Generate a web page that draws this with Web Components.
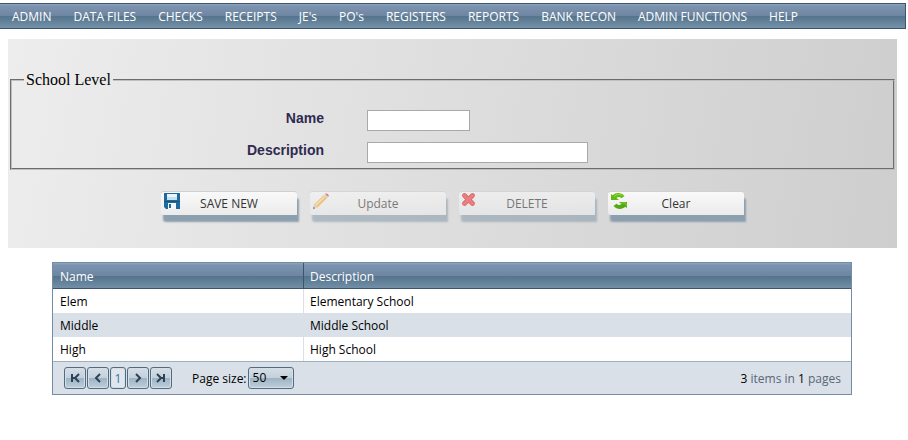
<!DOCTYPE html>
<html lang="en">
<head>
<meta charset="utf-8">
<title>School Level</title>
<style>
    :root {
        --font-ui: "Open Sans", "Noto Sans", sans-serif;
        --color-edge: #3d556c;
        --color-frame: #768ca5;
        --color-alt: #d9e0e7;
        --bar: linear-gradient(#8fa5bb 0, #7c94b0 2px, #6d85a0 50%, #54738c 50%, #7491a8 100%);
    }

    body {
        margin: 3px 0 0;
        background: white;
        font: 12px/16px var(--font-ui);
    }

    main {
        margin: 10px 11px 0 8px;
    }
</style>
</head>
<body>
<menu-bar>
    <menu-item>ADMIN</menu-item>
    <menu-item>DATA FILES</menu-item>
    <menu-item>CHECKS</menu-item>
    <menu-item>RECEIPTS</menu-item>
    <menu-item>JE's</menu-item>
    <menu-item>PO's</menu-item>
    <menu-item>REGISTERS</menu-item>
    <menu-item>REPORTS</menu-item>
    <menu-item>BANK RECON</menu-item>
    <menu-item>ADMIN FUNCTIONS</menu-item>
    <menu-item>HELP</menu-item>
</menu-bar>
<main>
    <form-panel legend="School Level">
        <form-field label="Name" size="short"></form-field>
        <form-field label="Description" size="long"></form-field>
        <tool-button slot="actions" icon="save">SAVE NEW</tool-button>
        <tool-button slot="actions" icon="edit" disabled>Update</tool-button>
        <tool-button slot="actions" icon="remove" disabled>DELETE</tool-button>
        <tool-button slot="actions" icon="refresh">Clear</tool-button>
    </form-panel>
    <data-grid>
        <grid-pager total="3" pages="1"></grid-pager>
    </data-grid>
</main>

<script>
function makeTemplate(html) {
  const template = document.createElement("template");
  template.innerHTML = html;
  return template;
}

class BaseElement extends HTMLElement {
  constructor() {
    super();
    this.attachShadow({ mode: "open" });
    this.shadowRoot.append(this.constructor.template.content.cloneNode(true));
  }

  $(selector) {
    return this.shadowRoot.querySelector(selector);
  }
}

class MenuBar extends BaseElement {
  static template = makeTemplate(`
<style>
    :host {
        display: block;
        margin-right: 2px;
    }

    nav {
        display: flex;
        height: 24px;
        padding-left: 1px;
        border: 1px solid var(--color-edge);
        border-left: none;
        background: var(--bar);
    }
</style>
<nav><slot></slot></nav>
`);
}

class MenuItem extends BaseElement {
  static template = makeTemplate(`
<style>
    :host {
        display: block;
    }

    a {
        display: block;
        padding: 0 11px;
        line-height: 25px;
        color: white;
        text-decoration: none;
        white-space: nowrap;
    }

    a:hover {
        background: var(--color-edge);
    }
</style>
<a href="#"><slot></slot></a>
`);
}

class FormPanel extends BaseElement {
  static template = makeTemplate(`
<style>
    :host {
        display: block;
        padding: 32px 2px 33px;
        background: linear-gradient(100deg, #eeeded, #cecece);
    }

    fieldset {
        margin: 0;
        padding: 21px 12px 5px;
        border: 2px groove #c0c0c0;
    }

    legend {
        padding: 0 2px;
        font: 16px/18px "Liberation Serif", serif;
        color: black;
    }

    .fields {
        display: grid;
        gap: 11px;
    }

    .actions {
        display: flex;
        justify-content: center;
        gap: 13px;
        margin-top: 21px;
    }
</style>
<fieldset>
    <legend></legend>
    <div class="fields"><slot></slot></div>
</fieldset>
<div class="actions"><slot name="actions"></slot></div>
`);

  connectedCallback() {
    this.$("legend").textContent = this.getAttribute("legend");
  }
}

class FormField extends BaseElement {
  static template = makeTemplate(`
<style>
    :host {
        display: grid;
        grid-template-columns: 300px 1fr;
        column-gap: 43px;
    }

    label {
        font: bold 14px/16px "Liberation Sans", sans-serif;
        color: #2e2a50;
        text-align: right;
    }

    input {
        box-sizing: border-box;
        width: 103px;
        height: 21px;
        margin: 0;
        padding: 1px 4px;
        border: 1px solid #a9a9a9;
        background: white;
        font: inherit;
    }

    :host([size="long"]) input {
        width: 221px;
    }
</style>
<label for="field"></label>
<input id="field" type="text">
`);

  connectedCallback() {
    this.$("label").textContent = this.getAttribute("label");
  }
}

const icons = {
  save: `
    <path d="M0 0h16v16H2l-2-2z" fill="#20699c"/>
    <path d="M3 1h10v6H3z" fill="#eaf4fa"/>
    <path d="M3 4h10v3H3z" fill="#c6e0ef"/>
    <path d="M4 10h8v6H4z" fill="#f4f8fb"/>
    <path d="M5 11h2v4H5z" fill="#20699c"/>
    <path d="M0 8h16v1H0z" fill="#17547f"/>`,
  edit: `
    <path d="M0 16l1.500-5L11 2l3 3-9 9z" fill="#f2a93c"/>
    <path d="M2 11.500L11.500 2.500l1.200 1.200L3.500 13z" fill="#ffd987"/>
    <path d="M0 16l1.500-4.500L4.800 14z" fill="#e9c9a0"/>
    <path d="M0 16l.7-2.200 1.600 1.500z" fill="#333"/>
    <path d="M11 2l1.300-1.200 3 3L14 5z" fill="#c9c9d0"/>
    <path d="M12.300.8C13.600-.5 17 2 15.300 3.800z" fill="#dc2222"/>`,
  remove: `
    <path d="M2.500 2.500l8 8M10.500 2.500l-8 8" stroke="#d42222" stroke-width="4.600" stroke-linecap="round"/>
    <path d="M2.500 2.500l8 8M10.500 2.500l-8 8" stroke="#f54040" stroke-width="3" stroke-linecap="round"/>`,
  refresh: `
    <path d="M0 1l1.800 1.200C4.500-.5 10-1 13.500 3L10.500 5.200C8.800 3.600 6.800 3.800 5.500 5L8 7H0z" fill="#63bb12"/>
    <path d="M16 15l-1.800-1.200C11.500 16.500 6 17 2.500 13l3-2.200c1.700 1.600 3.700 1.400 5 .2L8 9h8z" fill="#52ab0e"/>
    <path d="M3 3.500C5.500 1 9 .8 11.500 2.800" fill="none" stroke="#a0dc4a"/>
    <path d="M10 10h5v3" fill="none" stroke="#85cc30"/>`,
};

class ToolButton extends BaseElement {
  static template = makeTemplate(`
<style>
    :host {
        display: block;
    }

    button {
        display: flex;
        box-sizing: border-box;
        width: 136px;
        height: 24px;
        padding: 1px 3px;
        border: none;
        border-top: 1px solid #d0d0d0;
        border-radius: 3px 3px 0 3px;
        background: linear-gradient(#f9f9f9, #ebebeb);
        box-shadow: 2px 7px 2px #8c9fae;
        font: inherit;
        line-height: 22px;
        color: #333;
        cursor: pointer;
    }

    button:disabled {
        opacity: 0.6;
        cursor: default;
    }

    svg {
        flex: none;
        width: 16px;
        height: 16px;
    }

    span {
        flex: 1;
        padding-right: 16px;
        text-align: center;
    }
</style>
<button type="button">
    <svg viewBox="0 0 16 16" aria-hidden="true"></svg>
    <span><slot></slot></span>
</button>
`);

  connectedCallback() {
    this.$("svg").innerHTML = icons[this.getAttribute("icon")];
    this.$("button").disabled = this.hasAttribute("disabled");
  }
}

const levels = [
  { name: "Elem", description: "Elementary School" },
  { name: "Middle", description: "Middle School" },
  { name: "High", description: "High School" },
];

class DataGrid extends BaseElement {
  static template = makeTemplate(`
<style>
    :host {
        display: block;
        margin: 14px 45px 0 44px;
        border: 1px solid var(--color-frame);
    }

    table {
        width: 100%;
        border-spacing: 0;
        table-layout: fixed;
    }

    th, td {
        box-sizing: border-box;
        height: 24px;
        padding: 1px 7px 0;
        text-align: left;
        color: black;
    }

    th {
        height: 26px;
        padding-top: 2px;
        border-bottom: 1px solid var(--color-edge);
        font-weight: normal;
        color: white;
    }

    th + th, td + td {
        padding-left: 6px;
    }

    th + th {
        border-left: 1px solid var(--color-edge);
    }

    td + td {
        border-left: 1px solid var(--color-alt);
    }

    thead tr {
        background: var(--bar);
    }

    tbody tr:nth-child(even) {
        background: var(--color-alt);
    }

    .name {
        width: 250px;
    }
</style>
<table>
    <thead><tr><th class="name" scope="col">Name</th><th scope="col">Description</th></tr></thead>
    <tbody></tbody>
</table>
<slot></slot>
`);

  connectedCallback() {
    const body = this.$("tbody");
    body.replaceChildren();
    for (const level of levels) {
      const row = body.insertRow();
      row.insertCell().textContent = level.name;
      row.insertCell().textContent = level.description;
    }
  }
}

class GridPager extends BaseElement {
  static template = makeTemplate(`
<style>
    :host {
        display: flex;
        align-items: center;
        height: 32px;
        padding: 0 10px 0 11px;
        border-top: 1px solid #9cb0c4;
        background: var(--color-alt);
        color: #5a6779;
    }

    .pages {
        display: flex;
        gap: 1px;
        margin-right: 20px;
    }

    button, a, select {
        box-sizing: border-box;
        height: 22px;
        border: 1px solid #516b83;
        border-radius: 3px;
        background: linear-gradient(#d5dee6, #c3d0dc 50%, #9db2c2 50%, #c0d0dc);
        box-shadow: inset 0 0 0 1px #d3dee7;
    }

    button {
        display: grid;
        place-items: center;
        width: 22px;
        padding: 0;
        cursor: pointer;
    }

    a {
        width: 16px;
        background: #dfe6ed;
        line-height: 21px;
        text-align: center;
        text-decoration: none;
        color: #4273a5;
    }

    svg {
        fill: none;
        stroke: #2d4257;
        stroke-width: 2;
    }

    label {
        margin-right: 1px;
        color: black;
    }

    label, .info {
        padding-top: 1px;
    }

    .size {
        position: relative;
    }

    select {
        display: block;
        width: 46px;
        padding: 0 4px;
        appearance: none;
        font: inherit;
        color: black;
    }

    .size svg {
        position: absolute;
        top: 9px;
        right: 6px;
        fill: black;
        stroke: none;
        pointer-events: none;
    }

    .info {
        margin-left: auto;
    }

    b {
        font-weight: normal;
        color: black;
    }
</style>
<div class="pages">
    <button type="button" aria-label="First page"><svg width="10" height="10"><path d="M2 1v8M9 1L5 5l4 4M2 5h3"/></svg></button>
    <button type="button" aria-label="Previous page"><svg width="10" height="10"><path d="M7 1L3 5l4 4"/></svg></button>
    <a href="#">1</a>
    <button type="button" aria-label="Next page"><svg width="10" height="10"><path d="M3 1l4 4-4 4"/></svg></button>
    <button type="button" aria-label="Last page"><svg width="10" height="10"><path d="M8 1v8M1 1l4 4-4 4M8 5H5"/></svg></button>
</div>
<label for="size">Page size:</label>
<div class="size">
    <select id="size"><option>50</option></select>
    <svg width="8" height="4"><path d="M0 0h8L4 4z"/></svg>
</div>
<div class="info"><b class="total"></b> items in <b class="count"></b> pages</div>
`);

  connectedCallback() {
    this.$(".total").textContent = this.getAttribute("total");
    this.$(".count").textContent = this.getAttribute("pages");
  }
}

customElements.define("menu-bar", MenuBar);
customElements.define("menu-item", MenuItem);
customElements.define("form-panel", FormPanel);
customElements.define("form-field", FormField);
customElements.define("tool-button", ToolButton);
customElements.define("data-grid", DataGrid);
customElements.define("grid-pager", GridPager);
</script>
</body>
</html>
